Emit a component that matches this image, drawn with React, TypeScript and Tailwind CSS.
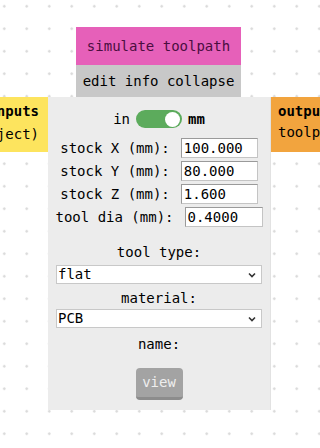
import React from "react";

const mono = { fontFamily: '"DejaVu Sans Mono", monospace' };

function Field({ label, value, w }: { label: string; value: string; w: string }) {
  return (
    <div className="flex items-center justify-center gap-[11px] h-[20px]">
      <span className="leading-[17px]">{label}</span>
      <div className={`${w} h-[20px] bg-white border border-[#c4c4c4] border-t-[#9a9a9a] border-l-[#9a9a9a] pl-[2px] leading-[18px] text-[14px] text-black`}>
        {value}
      </div>
    </div>
  );
}

function Select({ value }: { value: string }) {
  return (
    <div className="mx-[8px] h-[19px] bg-white border border-[#c8c8c8] flex items-center justify-between pl-[1px] pr-[5px]">
      <span className="leading-[17px]">{value}</span>
      <svg width="8" height="6" viewBox="0 0 8 6">
        <path d="M1 1.5 L4 4.5 L7 1.5" fill="none" stroke="#333" strokeWidth="1.6" />
      </svg>
    </div>
  );
}

export default function App() {
  return (
    <div
      className="w-[320px] h-[448px] overflow-hidden bg-white relative text-[14px] text-black bg-[radial-gradient(circle,#d9d9d9_1px,transparent_1.5px)] bg-[size:22.5px_22.5px] bg-[position:-7px_-5px]"
      style={mono}
    >
      <div className="pt-[27px] flex flex-col">
        <div className="ml-[76px] w-[165px] flex flex-col">
          <div className="h-[38px] bg-[#e660b9] text-[#4a0e40] flex items-center justify-center">
            simulate toolpath
          </div>
          <div className="h-[32px] bg-[#c8c8c8] flex items-center justify-center">
            edit info collapse
          </div>
        </div>
        <div className="flex items-start">
          <div className="w-[48px] h-[55px] bg-[#fde45e] flex flex-col items-end pr-[9px] pt-[6px] overflow-visible">
            <span className="font-bold leading-[17px] whitespace-nowrap">inputs</span>
            <span className="leading-[17px] mt-[6px] whitespace-nowrap">(object)</span>
          </div>
          <div className="w-[223px] h-[313px] bg-[#ececec] flex flex-col border-r border-[#e2e2e2]">
            <div className="mt-[13px] h-[18px] flex items-center justify-center gap-[6px]">
              <span className="leading-[17px]">in</span>
              <div className="w-[46px] h-[18px] rounded-full bg-[#5cab5c] flex items-center justify-end pr-[2px]">
                <div className="w-[15px] h-[15px] rounded-full bg-white" />
              </div>
              <span className="font-bold leading-[17px]">mm</span>
            </div>
            <div className="mt-[10px] flex flex-col gap-[3px]">
              <Field label="stock X (mm):" value="100.000" w="w-[77px]" />
              <Field label="stock Y (mm):" value="80.000" w="w-[77px]" />
              <Field label="stock Z (mm):" value="1.600" w="w-[77px]" />
              <Field label="tool dia (mm):" value="0.4000" w="w-[78px]" />
            </div>
            <div className="mt-[17px] text-center leading-[17px]">tool type:</div>
            <div className="mt-[4px]">
              <Select value="flat" />
            </div>
            <div className="mt-[6px] text-center leading-[17px]">material:</div>
            <div className="mt-[2px]">
              <Select value="PCB" />
            </div>
            <div className="mt-[8px] text-center leading-[17px]">name:</div>
            <div className="mt-[15px] flex justify-center">
              <div className="w-[47px] h-[32px] rounded-[4px] bg-[#a3a3a3] border-b-[3px] border-[#8c8c8c] flex items-center justify-center text-[#eeeeee]">
                view
              </div>
            </div>
          </div>
          <div className="w-[49px] h-[55px] bg-[#f2a43e] flex flex-col pl-[7px] pt-[6px]">
            <span className="font-bold leading-[17px] whitespace-nowrap">outputs</span>
            <span className="leading-[17px] mt-[4px] whitespace-nowrap">toolpath</span>
          </div>
        </div>
      </div>
    </div>
  );
}
